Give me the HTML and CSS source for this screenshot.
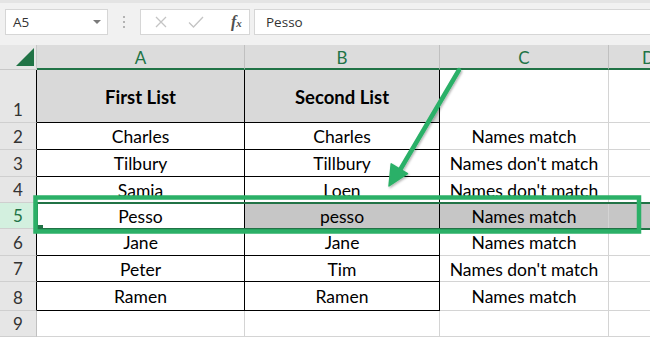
FILE: index.html
```html
<!DOCTYPE html>
<html>
<head>
<meta charset="utf-8">
<link rel="stylesheet" href="styles.css">
</head>
<body>
<div class="app">
  <div class="fbar">
    <div class="namebox"><span>A5</span><span class="dd"></span></div>
    <div class="dots"><i></i><i></i><i></i></div>
    <div class="btns">
      <svg class="ic" width="16" height="16" viewBox="0 0 16 16"><path d="M3 3 L13 13 M13 3 L3 13" stroke="#c4c4c4" stroke-width="1.3" fill="none"/></svg>
      <svg class="ic" width="18" height="16" viewBox="0 0 18 16"><path d="M2 8.5 L6.5 13 L16 3" stroke="#c4c4c4" stroke-width="1.3" fill="none"/></svg>
      <span class="fx"><span class="f">f</span><span class="x">x</span></span>
    </div>
    <div class="finput">Pesso</div>
  </div>
  <div class="sheet">
    <div class="corner"><svg width="18" height="18" viewBox="0 0 18 18"><polygon points="18,0 18,18 0,18" fill="#217346"/></svg></div>
    <div class="ch">A</div>
    <div class="ch">B</div>
    <div class="ch">C</div>
    <div class="ch last">D</div>

    <div class="rh blk">1</div>
    <div class="c bk hd">First List</div>
    <div class="c bk hd">Second List</div>
    <div class="c"></div>
    <div class="c"></div>

    <div class="rh blk">2</div>
    <div class="c bk">Charles</div>
    <div class="c bk">Charles</div>
    <div class="c">Names match</div>
    <div class="c"></div>

    <div class="rh blk">3</div>
    <div class="c bk">Tilbury</div>
    <div class="c bk">Tillbury</div>
    <div class="c">Names don't match</div>
    <div class="c"></div>

    <div class="rh blk">4</div>
    <div class="c bk">Samia</div>
    <div class="c bk">Loen</div>
    <div class="c">Names don't match</div>
    <div class="c"></div>

    <div class="rh blk sel">5</div>
    <div class="c bk">Pesso</div>
    <div class="c bk gr">pesso</div>
    <div class="c gr">Names match</div>
    <div class="c gr"></div>

    <div class="rh blk">6</div>
    <div class="c bk">Jane</div>
    <div class="c bk">Jane</div>
    <div class="c">Names match</div>
    <div class="c"></div>

    <div class="rh blk">7</div>
    <div class="c bk">Peter</div>
    <div class="c bk">Tim</div>
    <div class="c">Names don't match</div>
    <div class="c"></div>

    <div class="rh blk">8</div>
    <div class="c bk">Ramen</div>
    <div class="c bk">Ramen</div>
    <div class="c">Names match</div>
    <div class="c"></div>

    <div class="rh">9</div>
    <div class="c"></div>
    <div class="c"></div>
    <div class="c"></div>
    <div class="c"></div>
  </div>
  <div class="selbox"><span class="handle"></span></div>
  <svg class="annot" width="650" height="337" viewBox="0 0 650 337">
    <defs>
      <filter id="sh" x="-20%" y="-20%" width="140%" height="140%">
        <feDropShadow dx="1" dy="1.5" stdDeviation="1.2" flood-color="#000" flood-opacity="0.3"/>
      </filter>
    </defs>
    <rect x="35.5" y="197.5" width="603.5" height="34" fill="none" stroke="#2bb067" stroke-width="4.5"/>
    <g filter="url(#sh)">
      <line x1="459" y1="70" x2="400" y2="170" stroke="#2bb067" stroke-width="4.5" stroke-linecap="round"/>
      <polygon points="389,186 407.5,173.6 391.2,163.9" fill="#2bb067" stroke="#2bb067" stroke-width="1.5" stroke-linejoin="round"/>
    </g>
  </svg>
</div>
</body>
</html>
```

FILE: styles.css
```css
* { box-sizing: border-box; }
html, body { margin: 0; padding: 0; }
body { width: 650px; height: 337px; overflow: hidden; background: #fff; }
.app { position: relative; width: 650px; height: 337px; overflow: hidden; }

.fbar {
  height: 45px;
  background: #f1f1f1;
  border-top: 3px solid #e4e4e4;
  padding: 6px 0 0 5px;
  display: flex;
  align-items: flex-start;
  font-family: "Open Sans", "Noto Sans", sans-serif;
  font-size: 13.5px;
  color: #333;
}
.namebox {
  width: 103px; height: 26px;
  background: #fff;
  border: 1px solid #d6d6d6;
  display: flex; align-items: center; justify-content: space-between;
  padding: 0 6px 0 7px;
}
.dd { width: 0; height: 0; border-left: 4px solid transparent; border-right: 4px solid transparent; border-top: 4px solid #7a7a7a; }
.dots { width: 32px; height: 26px; display: flex; flex-direction: column; align-items: center; justify-content: center; gap: 3px; }
.dots i { display: block; width: 2px; height: 2px; background: #b3b3b3; }
.btns {
  width: 110px; height: 26px;
  background: #fff;
  border: 1px solid #d6d6d6;
  display: flex; align-items: center;
  padding-left: 12px;
  gap: 18px;
}
.ic { display: block; }
.fx { font-family: "Liberation Serif", serif; font-style: italic; color: #505050; margin-left: 8px; }
.fx .f { font-size: 16px; font-weight: bold; }
.fx .x { font-size: 11px; font-weight: bold; }
.finput {
  flex: 1; height: 26px; margin-left: 4px;
  background: #fff;
  border: 1px solid #d6d6d6;
  border-right: none;
  display: flex; align-items: center;
  padding-left: 11px;
}

.sheet {
  width: 689px;
  display: grid;
  grid-template-columns: 37px 208px 195px 169px 80px;
  grid-template-rows: 25px 53px 27px 27px 26px 26px 27px 26px 29px 26px;
  font-family: "Lato", "Liberation Sans", sans-serif;
  font-size: 17.5px;
  color: #000;
}
.corner {
  background: #e6e6e6;
  border-right: 1px solid #c8c8c8;
  border-bottom: 1px solid #c8c8c8;
  display: flex; align-items: flex-end; justify-content: flex-end;
  padding: 0 2px 3px 0;
}
.corner svg { display: block; }
.ch {
  background: #dcdcdc;
  border-right: 1px solid #c0c0c0;
  border-bottom: 2px solid #217346;
  color: #217346;
  display: flex; align-items: center; justify-content: center;
  font-size: 17px;
  padding-top: 2px;
}
.rh {
  background: #e6e6e6;
  border-right: 1px solid #c0c0c0;
  border-bottom: 1px solid #cfcfcf;
  color: #333;
  display: flex; align-items: flex-end; justify-content: center;
  padding-bottom: 2px;
  font-size: 17px;
}
.rh.blk { border-right-color: #000; }
.rh.sel { background: #d3f0df; color: #217346; }
.c {
  border-right: 1px solid #d4d4d4;
  border-bottom: 1px solid #d4d4d4;
  display: flex; align-items: center; justify-content: center;
  white-space: nowrap;
  padding-top: 1px;
}
.c.bk { border-right-color: #000; border-bottom-color: #000; }
.c.hd { background: #d9d9d9; font-weight: bold; font-size: 18.5px; }
.c.gr { background: #c6c6c6; }

.selbox {
  position: absolute;
  left: 36px; top: 202px;
  width: 640px; height: 28px;
  border: 2px solid #217346;
}
.handle {
  position: absolute; left: 0; bottom: -2px;
  width: 5px; height: 5px; background: #217346;
}
.annot { position: absolute; left: 0; top: 0; pointer-events: none; }
```
